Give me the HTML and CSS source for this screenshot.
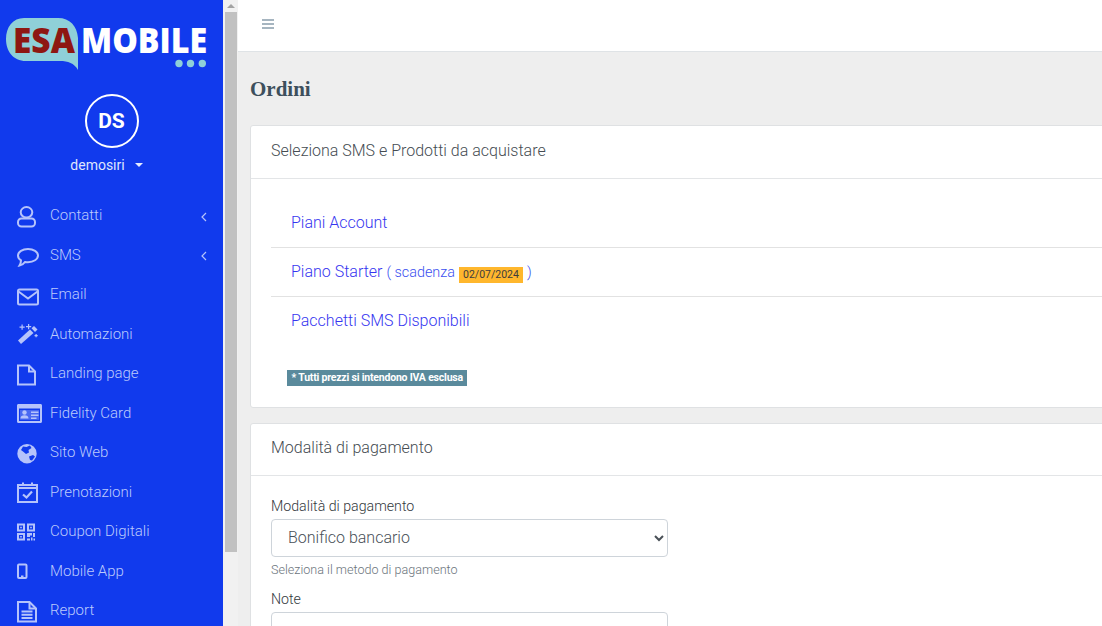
FILE: index.html
```html
<!DOCTYPE html>
<html lang="it">
<head>
<meta charset="utf-8">
<title>Ordini</title>
<link rel="stylesheet" href="styles.css">
</head>
<body>
<div class="app">
  <aside class="sidebar">
    <svg class="logo" width="210" height="72" viewBox="0 0 210 72">
      <path class="bubble" d="M24 18H58C70 18 77 26 78 38V70C74 63 68 61 60 61H26C13 61 6 51 6 39C6 27 13 18 24 18Z"/>
      <text class="logo-esa" transform="translate(13 53) scale(.93 1)">ESA</text>
      <text class="logo-mobile" transform="translate(81 53) scale(.895 1)">MOBILE</text>
      <circle class="dot" cx="179" cy="63.500" r="3.700"/><circle class="dot" cx="190.500" cy="63.500" r="3.700"/><circle class="dot" cx="202.300" cy="63.500" r="3.700"/>
    </svg>
    <div class="avatar">DS</div>
    <div class="user">demosiri<span class="caret"></span></div>
    <nav class="menu">
      <a class="item"><svg class="ico" viewBox="0 0 26 24"><ellipse cx="9.500" cy="7.300" rx="5.800" ry="5.200"/><rect x="1" y="13.500" width="17" height="8" rx="3.500"/></svg><span>Contatti</span><svg class="chev" viewBox="0 0 8 12"><path d="M6 2 2 6l4 4"/></svg></a>
      <a class="item"><svg class="ico" viewBox="0 0 26 24"><path d="M11 5C5.500 5 1 7.800 1 11.500C1 13.500 2.200 15.200 4 16.300C4 18 3.500 19.800 2.500 21.500C5 21 6.800 19.800 8 18C9 18.100 10 18.200 11 18.200C16.500 18.200 21 15.200 21 11.500C21 7.800 16.500 5 11 5Z"/></svg><span>SMS</span><svg class="chev" viewBox="0 0 8 12"><path d="M6 2 2 6l4 4"/></svg></a>
      <a class="item"><svg class="ico" viewBox="0 0 26 24"><rect x="1" y="5.500" width="20" height="15" rx="1.500"/><path d="M1.500 7.500 11 14.500 20.500 7.500"/></svg><span>Email</span></a>
      <a class="item"><svg class="ico solid" viewBox="0 0 26 24"><path d="M1 17.500 13 6.500 16.500 10 4 21Z"/><path d="M14.500 5.200 17 3 20.500 6.500 18 9Z"/><path d="M4.500 1.500h1.200v2h2v1.200h-2v2H4.500v-2h-2V3.500h2ZM11 1h1.200v2h2v1.200h-2v2H11v-2H9V3h2ZM18.500 11h1.200v1h1v1.200h-1v1h-1.200v-1h-1V12h1Z"/></svg><span>Automazioni</span></a>
      <a class="item"><svg class="ico" viewBox="0 0 26 24"><path d="M1 2.500H12L18 8.500V21.500H1Z"/><path d="M12 2.500V8.500H18"/></svg><span>Landing page</span></a>
      <a class="item"><svg class="ico solid" viewBox="0 0 26 24"><path fill-rule="evenodd" d="M1.500 2H23.500C24.400 2 25 2.600 25 3.500V19.500C25 20.400 24.400 21 23.500 21H1.500C.6 21 0 20.400 0 19.500V3.500C0 2.600 .6 2 1.500 2ZM2 6.500V19H23V6.500Z"/><path d="M3 8H22V17.800H3Z" opacity=".35"/><circle cx="7.500" cy="10.500" r="2.200"/><path d="M3.500 16.500C3.500 14.300 5 13.300 7.500 13.300S11.500 14.300 11.500 16.500ZM14 9.500h7.500v1.500H14ZM14 12.500h7.500V14H14ZM14 15.500h5.500V17H14Z"/></svg><span>Fidelity Card</span></a>
      <a class="item"><svg class="ico solid" viewBox="0 0 26 24"><path fill-rule="evenodd" d="M10 2A9.700 9.700 0 1 0 10 21.400 9.700 9.700 0 0 0 10 2ZM6 4.500 9.500 5 13 3.500 14.500 6 11.500 8 12 10.500 9 12 6 9.500 4 8ZM12 14.500 16 13 18 14.500 15 18.500 13 18Z"/></svg><span>Sito Web</span></a>
      <a class="item"><svg class="ico" viewBox="0 0 26 24"><path d="M1 4H20V21H1Z"/><path class="band" d="M1 7H20M6 1.500V5M15 1.500V5"/><path class="check" d="M6 13.500 9.500 16.500 15 10.500"/></svg><span>Prenotazioni</span></a>
      <a class="item"><svg class="ico solid" viewBox="0 0 26 24"><path fill-rule="evenodd" d="M0 2.500H8V10.500H0ZM2 4.500V8.500H6V4.500ZM10 2.500H18V10.500H10ZM12 4.500V8.500H16V4.500ZM0 12H8V19.500H0ZM2 14V17.500H6V14Z"/><path d="M3.200 5.700h1.600v1.600H3.200ZM13.200 5.700h1.600v1.600h-1.600ZM3.200 15h1.600v1.600H3.200ZM10 12H15V14.500H13V16H10ZM16 12H18V16H16ZM10 17.500H13V19.500H10ZM14 16.500H15.500V19.500H14ZM16.500 17.500H18V19.500H16.500Z"/></svg><span>Coupon Digitali</span></a>
      <a class="item"><svg class="ico" viewBox="0 0 26 24"><rect x="1" y="4.500" width="8.500" height="13.500" rx="1"/><path d="M4 16.500h2.500"/></svg><span>Mobile App</span></a>
      <a class="item"><svg class="ico" viewBox="0 0 26 24"><path d="M1 2H12.500L19 8.500V21.500H1Z"/><path d="M12.500 2V8.500H19"/><path d="M4.500 11.500H15.500M4.500 14.800H15.500M4.500 18H15.500"/></svg><span>Report</span></a>
    </nav>
  </aside>
  <div class="scrollbar">
    <div class="scroll-up"><span class="scroll-arrow"></span></div>
    <div class="scroll-thumb"></div>
  </div>
  <main class="main">
    <header class="topbar">
      <svg class="burger" width="12" height="10" viewBox="0 0 12 10"><path d="M0 0h12v2H0zM0 4h12v2H0zM0 8h12v2H0z"/></svg>
    </header>
    <div class="content">
      <h1 class="title">Ordini</h1>
      <section class="card">
        <div class="card-head">Seleziona SMS e Prodotti da acquistare</div>
        <div class="card-body first">
          <div class="row"><a class="plan">Piani Account</a></div>
          <div class="row"><a class="plan">Piano Starter</a> <span class="expiry">( scadenza <span class="badge">02/07/2024</span> )</span></div>
          <div class="row last"><a class="plan">Pacchetti SMS Disponibili</a></div>
          <span class="note">* Tutti prezzi si intendono IVA esclusa</span>
        </div>
      </section>
      <section class="card">
        <div class="card-head compact">Modalità di pagamento</div>
        <div class="card-body">
          <label class="label">Modalità di pagamento</label>
          <select class="field"><option>Bonifico bancario</option></select>
          <small class="hint">Seleziona il metodo di pagamento</small>
          <label class="label">Note</label>
          <div class="field"></div>
        </div>
      </section>
    </div>
  </main>
</div>
</body>
</html>
```
FILE: styles.css
```css
* { box-sizing: border-box; }
html, body { margin: 0; height: 100%; overflow: hidden; }
body { font-family: Roboto, "Liberation Sans", sans-serif; font-weight: 300; color: #495057; background: #f1f1f1; }
.app { display: flex; height: 626px; overflow: hidden; }

.sidebar { width: 223px; flex: none; background: #113aed; color: #fff; display: flex; flex-direction: column; align-items: stretch; overflow: hidden; }
.logo { display: block; flex: none; }
.bubble { fill: #8fd0d8; }
.logo-esa { font: 800 36px "Open Sans", "Liberation Sans", sans-serif; fill: #8e1712; }
.logo-mobile { font: 800 36px "Open Sans", "Liberation Sans", sans-serif; fill: #fff; }
.dot { fill: #8fd0d8; }
.avatar { flex: none; width: 54px; height: 54px; margin: 22px auto 0; border: 2px solid #fff; border-radius: 50%; display: flex; align-items: center; justify-content: center; font-size: 21px; font-weight: 700; }
.user { flex: none; margin-top: 7px; padding-right: 10px; height: 20px; line-height: 20px; text-align: center; font-size: 14px; font-weight: 400; color: #dfe5fd; }
.caret { display: inline-block; margin-left: 10px; vertical-align: 3px; border: 4px solid transparent; border-top-color: #e6ebfe; border-bottom: 0; }
.menu { display: flex; flex-direction: column; margin-top: 21.750px; }
.item { display: flex; align-items: center; height: 39.500px; flex: none; padding-left: 17px; color: #bccafc; font-size: 15px; }
.item span { flex: 1; margin-left: 7px; padding-bottom: 3px; }
.ico { width: 26px; height: 24px; flex: none; fill: none; stroke: #b5c3fb; stroke-width: 2; }
.ico.solid { fill: #b5c3fb; stroke: none; }
.ico .band { stroke-width: 2; }
.ico .check { stroke-width: 2.200; }
.chev { width: 8px; height: 12px; flex: none; margin-right: 15px; fill: none; stroke: #b5c3fb; stroke-width: 1.200; }

.scrollbar { width: 15px; flex: none; background: #f1f1f1; display: flex; flex-direction: column; }
.scroll-up { height: 12px; display: flex; justify-content: center; align-items: center; flex: none; }
.scroll-arrow { border: 4px solid transparent; border-bottom-color: #a3a3a3; border-top: 0; }
.scroll-thumb { height: 540px; background: #c1c1c1; margin: 0 1px 0 2px; flex: none; }

.main { flex: 1; min-width: 0; overflow: hidden; background: #eeeeee; }
.topbar { height: 52px; background: #fff; border-bottom: 1px solid #dfe3e6; padding: 19px 0 0 24px; }
.burger { display: block; fill: #a6b5c0; }
.content { padding: 0 0 0 12px; width: 900px; }
.title { margin: 0; padding-top: 24px; height: 73px; font: 700 21px/26px "Liberation Serif", serif; color: #3d4f5c; }
.card { background: #fff; border: 1px solid #dfe1e3; border-radius: 3px; margin-bottom: 15px; }
.card-head { height: 53px; padding: 15px 20px 0; border-bottom: 1px solid #e3e5e7; font-size: 16px; line-height: 19px; color: #454c52; }
.card-head.compact { height: 52px; padding-top: 14px; }
.card-body { padding: 14px 20px 0; }
.card-body.first { padding-top: 20px; height: 228px; }
.row { height: 49px; padding: 14px 20px 0; border-bottom: 1px solid #e2e2e2; font-size: 16px; line-height: 20px; }
.row.last { border-bottom: 0; height: 69px; }
.plan { color: #3636f0; }
.expiry { color: #3b4ff0; font-size: 14.400px; }
.badge { display: inline-block; background: #ffb72d; color: #3d3d3d; font-size: 10.500px; font-weight: 400; line-height: 16px; height: 16px; padding: 0 4.500px; vertical-align: -1px; }
.note { display: inline-block; margin-left: 16px; background: #5a8a9c; color: #fff; font-size: 10.500px; font-weight: 700; line-height: 16px; height: 16px; padding: 0 4.500px; white-space: nowrap; letter-spacing: -.2px; }
.label { display: block; font-size: 14.200px; line-height: 21px; color: #33393d; margin-top: 6px; }
.field { display: block; width: 397px; height: 38px; margin-top: 2px; padding: 0 12px 2px; border: 1px solid #ced4da; border-radius: 4px; background: #fff; font: 300 16px Roboto, sans-serif; color: #495057; }
.hint { display: block; margin: 3px 0 10px; font-size: 12.600px; line-height: 19px; color: #6c757d; }
```
